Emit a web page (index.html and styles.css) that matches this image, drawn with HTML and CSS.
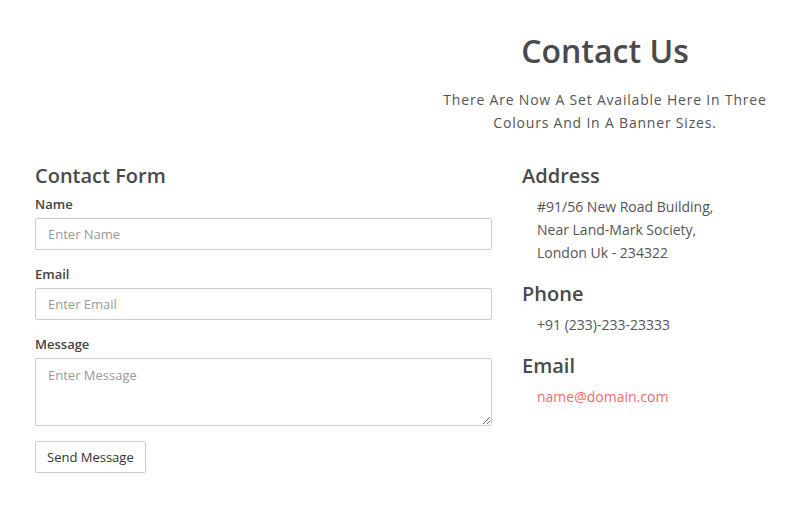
FILE: index.html
```html
<!DOCTYPE html>
<html>
<head>
<meta charset="utf-8">
<link rel="stylesheet" href="styles.css">
</head>
<body>
<div class="page">
  <header class="intro">
    <h1 class="title">Contact Us</h1>
    <p class="lead">There Are Now A Set Available Here In Three Colours And In A Banner Sizes.</p>
  </header>
  <div class="row">
    <form class="form">
      <h3 class="heading">Contact Form</h3>
      <label class="label first">Name</label>
      <input class="field" type="text" placeholder="Enter Name">
      <label class="label">Email</label>
      <input class="field" type="text" placeholder="Enter Email">
      <label class="label">Message</label>
      <textarea class="field area" placeholder="Enter Message"></textarea>
      <button class="btn" type="button">Send Message</button>
    </form>
    <div class="info">
      <h3 class="heading">Address</h3>
      <p class="text">#91/56 New Road Building,<br>Near Land-Mark Society,<br>London Uk - 234322</p>
      <h3 class="heading">Phone</h3>
      <p class="text">+91 (233)-233-23333</p>
      <h3 class="heading">Email</h3>
      <p class="text"><a class="mail" href="#">name@domain.com</a></p>
    </div>
  </div>
</div>
</body>
</html>
```
FILE: styles.css
```css
* { box-sizing: border-box; }
body {
  margin: 0;
  background: #fff;
  font-family: "Open Sans", "Noto Sans", sans-serif;
  color: #555;
}
.page { padding: 26px 35px 0 35px; }
.intro {
  margin-left: 402px;
  width: 336px;
  text-align: center;
}
.title {
  margin: 0;
  font-size: 32px;
  font-weight: 600;
  line-height: 50px;
  color: #4a4a4a;
}
.lead {
  margin: 12px 0 0;
  font-size: 14px;
  line-height: 23px;
  letter-spacing: 0.8px;
  color: #555;
}
.row {
  display: grid;
  grid-template-columns: 457px 1fr;
  column-gap: 30px;
  margin-top: 27px;
}
.form { display: flex; flex-direction: column; align-items: flex-start; }
.heading {
  margin: 0;
  font-size: 20px;
  font-weight: 600;
  line-height: 30px;
  color: #4a4a4a;
}
.label {
  font-size: 13px;
  font-weight: 600;
  line-height: 18px;
  color: #444;
  margin-top: 0;
  margin-bottom: 5px;
}
.label.first { margin-top: 4px; }
.field {
  width: 457px;
  height: 32px;
  border: 1px solid #ccc;
  border-radius: 2px;
  padding: 6px 12px;
  font-family: "Open Sans", sans-serif;
  font-size: 13px;
  color: #555;
  margin-bottom: 15px;
  outline: none;
}
.field::placeholder { color: #999; }
.area { height: 68px; resize: vertical; padding-top: 7px; margin-bottom: 15px; }
.btn {
  height: 32px;
  padding: 0 11px;
  background: #fff;
  border: 1px solid #ccc;
  border-radius: 2px;
  font-family: "Open Sans", sans-serif;
  font-size: 13px;
  color: #333;
}
.info .heading + .text { margin-top: 4px; }
.text {
  margin: 0 0 15px 15px;
  font-size: 14px;
  line-height: 23px;
  color: #555;
}
.mail { color: #f56b6b; text-decoration: none; }
```
